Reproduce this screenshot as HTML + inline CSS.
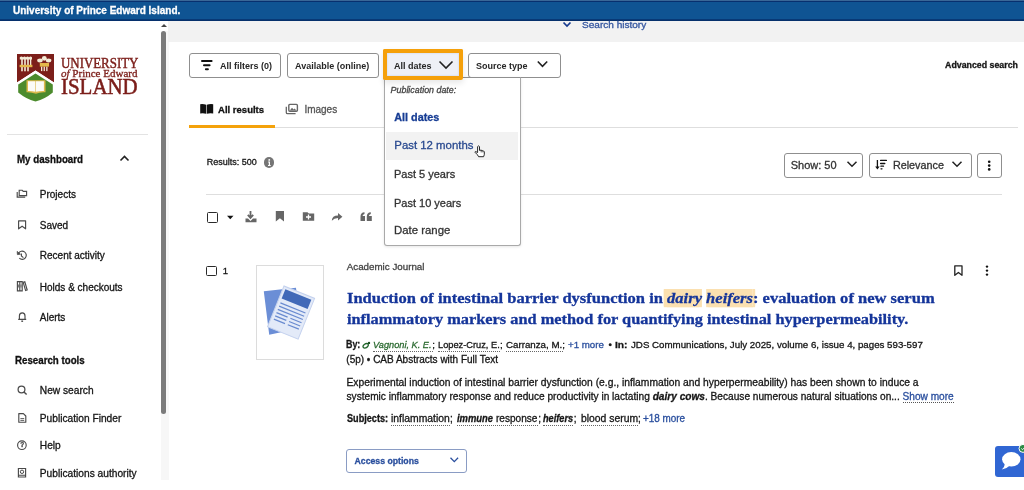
<!DOCTYPE html>
<html><head><meta charset="utf-8"><style>
html,body{margin:0;padding:0;width:1024px;height:490px;overflow:hidden;background:#fff;font-family:"Liberation Sans",sans-serif}
.t{position:absolute;line-height:1;white-space:nowrap;-webkit-text-stroke-width:0.3px}
</style></head><body><div id="root" style="position:absolute;left:0;top:0;width:1024px;height:490px;overflow:hidden;will-change:transform;background:#fff">
<div style="position:absolute;left:0;top:0;width:1024px;height:21px;background:linear-gradient(#3a6797 0,#3a6797 0.8px,#07306f 1px,#07306f 2px,#0f5493 2.2px,#0f5493 19.2px,#06306c 19.6px,#06306c 21px)"></div>
<div class="t" style="left:13px;top:5.73px;font-size:10px;color:#fff;font-weight:bold;font-style:normal;font-family:'Liberation Sans',sans-serif;">University of Prince Edward Island.</div>
<div style="position:absolute;left:161px;top:31px;width:8px;height:449px;background:#f7f7f7"></div>
<div style="position:absolute;left:161px;top:31px;width:5px;height:383px;background:#7b7b7b;border-radius:3px"></div>
<div style="position:absolute;left:160.8px;top:23.6px;width:0;height:0;border-left:3px solid transparent;border-right:3px solid transparent;border-bottom:3px solid #444"></div>
<svg style="position:absolute;left:0;top:0" width="160" height="110">
<path d="M17,53.9 H54 V82.5 L35.5,70.6 L17,82.5 Z" fill="#7c1f1a"/>
<path d="M17,82.5 L35.5,70.6 L54,82.5 V85 L35.5,73.4 L17,85 Z" fill="#fff"/>
<path d="M18.2,84.6 L35.5,73.4 L52.8,84.6 V92.5 Q45,99 35.5,101.6 Q26,99 18.2,92.5 Z" fill="#4c8b2d"/>
<path d="M26.5,80.3 H45.5 V92.2 Q40,91.8 36,93.8 Q31,91.8 26.5,92.2 Z" fill="#dcb94c"/>
<path d="M28,81.2 H35.3 V91.8 Q31.5,90.8 28,91 Z M35.9,81.2 H43.9 V91 Q40,90.8 35.9,91.8 Z" fill="#fbfbf6"/>
<g fill="#f3ebd6">
<path d="M19.8,57.2 Q21.5,55.6 23,57.2 Q24.5,55.6 26,57.2 Q27.5,55.6 29,57.2 Q30.5,55.6 32,57.2 V59.5 H19.8 Z"/>
<rect x="21.2" y="58" width="1.6" height="13.3"/><rect x="24.2" y="58" width="1.6" height="13.3"/><rect x="27.2" y="58" width="1.6" height="13.3"/><rect x="30" y="58" width="1.3" height="9"/>
<ellipse cx="40" cy="60.5" rx="2.8" ry="1.9"/><ellipse cx="44.3" cy="58.3" rx="2.4" ry="2.4"/><ellipse cx="48.6" cy="60.5" rx="2.8" ry="1.9"/>
<rect x="41" y="66.5" width="1.3" height="4.6"/><rect x="43.6" y="66.5" width="1.3" height="4.6"/><rect x="46.2" y="66.5" width="1.3" height="4.6"/>
</g>
<rect x="19.6" y="64.8" width="12.8" height="2.4" fill="#e4b84a"/>
<rect x="39.8" y="63" width="9.2" height="3.6" fill="#e4b84a"/>
</svg>
<div class="t" style="left:61px;top:55.7px;font:15px 'Liberation Serif',serif;color:#7b1d19;-webkit-text-stroke:0.45px #7b1d19;transform:scaleX(0.86);transform-origin:0 0;line-height:1;letter-spacing:0">UNIVERSITY</div>
<div class="t" style="left:61px;top:68.9px;font:10.5px 'Liberation Serif',serif;color:#7b1d19;-webkit-text-stroke:0.3px #7b1d19;transform:scaleX(1.05);transform-origin:0 0;line-height:1"><i>of</i> Prince Edward</div>
<div class="t" style="left:60.5px;top:76.4px;font:22.5px 'Liberation Serif',serif;color:#7b1d19;-webkit-text-stroke:0.55px #7b1d19;transform:scaleX(0.93);transform-origin:0 0;line-height:1">ISLAND</div>
<div style="position:absolute;left:7px;top:134px;width:141px;height:1px;background:#e3e3e3"></div>
<div class="t" style="left:17px;top:154.68px;font-size:10.3px;color:#111;font-weight:bold;font-style:normal;font-family:'Liberation Sans',sans-serif;transform:scaleX(0.945);transform-origin:0 0">My dashboard</div>
<svg style="position:absolute;left:119px;top:154px" width="12" height="9"><path d="M1.5,6.5 L5.5,2.5 L9.5,6.5" fill="none" stroke="#222" stroke-width="1.6"/></svg>
<div class="t" style="left:39.8px;top:189.84px;font-size:10px;color:#161616;font-weight:normal;font-style:normal;font-family:'Liberation Sans',sans-serif;">Projects</div>
<div class="t" style="left:39.8px;top:220.84px;font-size:10px;color:#161616;font-weight:normal;font-style:normal;font-family:'Liberation Sans',sans-serif;">Saved</div>
<div class="t" style="left:39.8px;top:251.43px;font-size:10px;color:#161616;font-weight:normal;font-style:normal;font-family:'Liberation Sans',sans-serif;">Recent activity</div>
<div class="t" style="left:39.8px;top:282.64px;font-size:10px;color:#161616;font-weight:normal;font-style:normal;font-family:'Liberation Sans',sans-serif;">Holds &amp; checkouts</div>
<div class="t" style="left:39.8px;top:313.24px;font-size:10px;color:#161616;font-weight:normal;font-style:normal;font-family:'Liberation Sans',sans-serif;">Alerts</div>
<div class="t" style="left:15.3px;top:356.28px;font-size:10.3px;color:#111;font-weight:bold;font-style:normal;font-family:'Liberation Sans',sans-serif;transform:scaleX(0.944);transform-origin:0 0">Research tools</div>
<div class="t" style="left:39.8px;top:385.87px;font-size:10.2px;color:#161616;font-weight:normal;font-style:normal;font-family:'Liberation Sans',sans-serif;">New search</div>
<div class="t" style="left:39.8px;top:413.87px;font-size:10.2px;color:#161616;font-weight:normal;font-style:normal;font-family:'Liberation Sans',sans-serif;">Publication Finder</div>
<div class="t" style="left:39.8px;top:441.07px;font-size:10.2px;color:#161616;font-weight:normal;font-style:normal;font-family:'Liberation Sans',sans-serif;">Help</div>
<div class="t" style="left:39.8px;top:468.57px;font-size:10.2px;color:#161616;font-weight:normal;font-style:normal;font-family:'Liberation Sans',sans-serif;">Publications authority</div>
<svg style="position:absolute;left:0;top:0" width="40" height="490" fill="none" stroke="#4a4a4a" stroke-width="1.15">
<path d="M19.2,195.6 V190.2 H22.2 L23.2,191.4 H26.6 V195.6 Z"/>
<path d="M17.2,192 V197.1 H25.2"/>
<path d="M18.6,220.8 H25.6 V228.8 L22.1,226.2 L18.6,228.8 Z" stroke-linejoin="round"/>
<path d="M19.3,258.2 A4.1,4.1 0 1 0 18.6,253.2"/>
<path d="M17.2,251.4 L17.4,254.6 L20.4,254.2 Z" fill="#4a4a4a" stroke-width="0.8"/>
<path d="M21.4,253.4 V256 L23.4,257.6"/>
<path d="M17.4,281.6 H22.2 V290.8 H17.4 Z M19.8,281.6 V290.8"/>
<path d="M18.6,284.5 V287.5 M21,284.5 V287.5" stroke-width="0.8"/>
<path d="M23.2,282.4 L24.8,281.8 L27.2,290 L25.6,290.6 Z"/>
<path d="M18.2,319.4 H26.2 M19.4,319.4 V316 A2.8,3.2 0 0 1 25,316 V319.4"/>
<path d="M21.3,321.2 H23.1" stroke-width="1.4"/>
<circle cx="21.5" cy="389.5" r="3.4" stroke-width="1.25"/><path d="M24,392 L26.6,394.6" stroke-width="1.4"/>
<path d="M18.8,413.6 H23.4 L25.8,416 V422.2 H18.8 Z" stroke-linejoin="round"/>
<path d="M20.4,418.6 H24.2 M20.4,420.4 H24.2" stroke-width="0.9"/>
<circle cx="21.9" cy="445.2" r="4.3" stroke-width="1.15"/>
<path d="M18.4,468.5 H25.6 V477 H18.4 Z M18.4,475.2 H25.6"/>
<circle cx="22" cy="471.8" r="1.7" stroke-width="1"/>
</svg>
<div class="t" style="left:20.3px;top:442.40px;font-size:6.5px;color:#4a4a4a;font-weight:bold;font-style:normal;font-family:'Liberation Sans',sans-serif;">?</div>
<div style="position:absolute;left:168px;top:21px;width:856px;height:21px;background:#f2f2f2"></div>
<svg style="position:absolute;left:561px;top:20px" width="12" height="9"><path d="M2.5,2.5 L6,6 L9.5,2.5" fill="none" stroke="#173b8f" stroke-width="1.7"/></svg>
<div class="t" style="left:581.7px;top:20.70px;font-size:9.1px;color:#3557a0;font-weight:normal;font-style:normal;font-family:'Liberation Sans',sans-serif;transform:scaleX(1.105);transform-origin:0 0">Search history</div>
<div style="position:absolute;box-sizing:border-box;border:1px solid #8f8f8f;border-radius:3px;background:#fff;left:189px;top:53px;width:92px;height:24.5px"></div>
<svg style="position:absolute;left:200px;top:58px" width="14" height="14"><path d="M2,3.1 H11.6 M4,7.3 H9.6 M5.9,11.3 H7.9" stroke="#111" stroke-width="2" stroke-linecap="round"/></svg>
<div class="t" style="left:220.2px;top:60.86px;font-size:9.5px;color:#262626;font-weight:bold;font-style:normal;font-family:'Liberation Sans',sans-serif;-webkit-text-stroke-width:0;transform:scaleX(0.947);transform-origin:0 0">All filters (0)</div>
<div style="position:absolute;box-sizing:border-box;border:1px solid #8f8f8f;border-radius:3px;background:#fff;left:286.5px;top:53px;width:92px;height:24.5px"></div>
<div class="t" style="left:295.3px;top:60.86px;font-size:9.5px;color:#262626;font-weight:bold;font-style:normal;font-family:'Liberation Sans',sans-serif;-webkit-text-stroke-width:0;transform:scaleX(0.947);transform-origin:0 0">Available (online)</div>
<div style="position:absolute;box-sizing:border-box;left:383.2px;top:48.8px;width:79.6px;height:31.3px;border:4.2px solid #f5a00a;border-radius:2px;background:#eef0f6;box-shadow:inset 0 0 1.5px 0.5px #d5dcef"></div>
<div class="t" style="left:393.6px;top:60.86px;font-size:9.5px;color:#262626;font-weight:bold;font-style:normal;font-family:'Liberation Sans',sans-serif;-webkit-text-stroke-width:0;transform:scaleX(0.947);transform-origin:0 0">All dates</div>
<svg style="position:absolute;left:438px;top:59px" width="16" height="11"><path d="M1.5,2.5 L8,9 L14.5,2.5" fill="none" stroke="#222" stroke-width="1.6"/></svg>
<div style="position:absolute;box-sizing:border-box;border:1px solid #8f8f8f;border-radius:3px;background:#fff;left:467.5px;top:53px;width:93px;height:24.5px"></div>
<div class="t" style="left:476.2px;top:60.86px;font-size:9.5px;color:#262626;font-weight:bold;font-style:normal;font-family:'Liberation Sans',sans-serif;-webkit-text-stroke-width:0;transform:scaleX(0.947);transform-origin:0 0">Source type</div>
<svg style="position:absolute;left:536px;top:59px" width="13" height="10"><path d="M1.8,2.5 L6.5,7.3 L11.2,2.5" fill="none" stroke="#222" stroke-width="1.6"/></svg>
<div class="t" style="left:945.1px;top:61.25px;font-size:8.8px;color:#161616;font-weight:bold;font-style:normal;font-family:'Liberation Sans',sans-serif;">Advanced search</div>
<svg style="position:absolute;left:199px;top:103px" width="16" height="12"><path d="M1.2,1.2 Q4,0.6 7.2,1.8 V10.8 Q4,9.8 1.2,10.6 Z M14.2,1.2 Q11,0.6 7.8,1.8 V10.8 Q11,9.8 14.2,10.6 Z" fill="#111"/></svg>
<div class="t" style="left:218.1px;top:105.26px;font-size:9.5px;color:#111;font-weight:bold;font-style:normal;font-family:'Liberation Sans',sans-serif;">All results</div>
<svg style="position:absolute;left:285px;top:103px" width="15" height="13"><rect x="3.8" y="1.4" width="8.6" height="6.8" rx="1" fill="none" stroke="#666" stroke-width="1.4"/><path d="M1.3,3.8 V9.4 Q1.3,10.6 2.5,10.6 H10.6" fill="none" stroke="#666" stroke-width="1.3"/><path d="M4.8,7.4 L7,4.8 L8.6,6.4 L9.6,5.4 L11.4,7.4 Z" fill="#666"/></svg>
<div class="t" style="left:304.4px;top:104.83px;font-size:10px;color:#555;font-weight:normal;font-style:normal;font-family:'Liberation Sans',sans-serif;">Images</div>
<div style="position:absolute;left:189px;top:127px;width:829px;height:1px;background:#dedede"></div>
<div style="position:absolute;left:189px;top:125px;width:86px;height:3px;background:#f4a20b"></div>
<div class="t" style="left:206.7px;top:157.88px;font-size:9px;color:#161616;font-weight:normal;font-style:normal;font-family:'Liberation Sans',sans-serif;">Results: 500</div>
<div style="position:absolute;left:263.8px;top:157.3px;width:10.5px;height:10.5px;border-radius:50%;background:#757575"></div>
<svg style="position:absolute;left:263.8px;top:157.3px" width="11" height="11"><circle cx="5.25" cy="2.9" r="0.95" fill="#fff"/><path d="M4.1,4.6 H6 V8 H6.7 V8.9 H4 V8 H4.8 V5.5 H4.1 Z" fill="#fff"/></svg>
<div style="position:absolute;box-sizing:border-box;border:1px solid #8f8f8f;border-radius:3px;background:#fff;left:784px;top:153px;width:79px;height:24.5px"></div>
<div class="t" style="left:790.7px;top:160.09px;font-size:11px;color:#333;font-weight:normal;font-style:normal;font-family:'Liberation Sans',sans-serif;">Show: 50</div>
<svg style="position:absolute;left:845px;top:159px" width="14" height="10"><path d="M2.5,2.8 L7,7.3 L11.5,2.8" fill="none" stroke="#222" stroke-width="1.5"/></svg>
<div style="position:absolute;box-sizing:border-box;border:1px solid #8f8f8f;border-radius:3px;background:#fff;left:869px;top:153px;width:102.5px;height:24.5px"></div>
<svg style="position:absolute;left:874px;top:158px" width="14" height="14"><path d="M3.4,2 V9.5" stroke="#111" stroke-width="1.3"/><path d="M1.2,8.4 H5.6 L3.4,11.6 Z" fill="#111"/><path d="M6.6,2.4 H12.4 M6.6,5.5 H10.8 M6.9,8.2 H9.5 M7,10.8 H8" stroke="#111" stroke-width="1.3" stroke-linecap="round"/></svg>
<div class="t" style="left:892.9px;top:160.26px;font-size:10.8px;color:#333;font-weight:normal;font-style:normal;font-family:'Liberation Sans',sans-serif;">Relevance</div>
<svg style="position:absolute;left:950px;top:159px" width="14" height="10"><path d="M2.5,2.8 L7,7.3 L11.5,2.8" fill="none" stroke="#222" stroke-width="1.5"/></svg>
<div style="position:absolute;box-sizing:border-box;border:1px solid #8f8f8f;border-radius:3px;background:#fff;left:977px;top:153px;width:24.5px;height:24.5px"></div>
<svg style="position:absolute;left:977px;top:153px" width="25" height="25"><circle cx="12.2" cy="8.8" r="1.3" fill="#111"/><circle cx="12.2" cy="12.6" r="1.3" fill="#111"/><circle cx="12.2" cy="16.4" r="1.3" fill="#111"/></svg>
<div style="position:absolute;left:206px;top:194px;width:796px;height:1px;background:#dedede"></div>
<div style="position:absolute;box-sizing:border-box;left:206.5px;top:212px;width:11px;height:11px;border:1.8px solid #2a2a2a;border-radius:1.5px"></div>
<svg style="position:absolute;left:0;top:0;overflow:visible" width="1" height="1"><path d="M227,215.8 H233.5 L230.25,219.2 Z" fill="#111"/><path d="M250.5,211 V217 M247.8,214.8 L250.5,217.8 L253.2,214.8" fill="none" stroke="#666" stroke-width="1.8"/><path d="M245.5,218.5 H248 L250.5,221 L253,218.5 H256.5 V222.2 H245.5 Z" fill="#666"/><path d="M275.8,211 H284 V221.5 L279.9,218.3 L275.8,221.5 Z" fill="#666"/><path d="M302.8,212.3 H307.5 L308.8,213.6 H314.2 V220.7 H302.8 Z" fill="#666"/><path d="M308.5,214.5 V219.5 M306,217 H311" stroke="#fff" stroke-width="1.3"/><path d="M331.8,220.7 Q332,215.5 338,215.5 V213 L342.4,216.8 L338,220.5 V218 Q334,218 331.8,220.7 Z" fill="#666"/><path d="M360.5,221 V216.5 Q360.5,212.5 364.5,212.3 V214 Q362.8,214.3 362.5,216 H365 V221 Z M366.8,221 V216.5 Q366.8,212.5 370.8,212.3 V214 Q369.1,214.3 368.8,216 H371.8 V221 Z" fill="#666"/></svg>
<div style="position:absolute;box-sizing:border-box;left:384.3px;top:77px;width:136.5px;height:168.5px;border:1px solid #a9a9a9;border-top-color:#8f8f8f;border-radius:0 0 3px 3px;background:#fff;box-shadow:0 1px 3px rgba(0,0,0,0.1)"></div>
<div style="position:absolute;box-sizing:border-box;left:383.2px;top:48.8px;width:79.6px;height:31.3px;border:4.2px solid #f5a00a;border-radius:2px;box-shadow:0 3px 6px rgba(0,0,0,0.10)"></div>
<div class="t" style="left:390.6px;top:86.17px;font-size:8.9px;color:#444;font-weight:normal;font-style:italic;font-family:'Liberation Sans',sans-serif;">Publication date:</div>
<div class="t" style="left:394.3px;top:111.76px;font-size:10.8px;color:#173d94;font-weight:bold;font-style:normal;font-family:'Liberation Sans',sans-serif;">All dates</div>
<div style="position:absolute;left:386.4px;top:131.5px;width:132px;height:28px;background:#f2f2f2"></div>
<div class="t" style="left:394.3px;top:140.25px;font-size:11.4px;color:#2a4a90;font-weight:normal;font-style:normal;font-family:'Liberation Sans',sans-serif;">Past 12 months</div>
<div class="t" style="left:394px;top:168.99px;font-size:11px;color:#333;font-weight:normal;font-style:normal;font-family:'Liberation Sans',sans-serif;">Past 5 years</div>
<div class="t" style="left:394px;top:197.59px;font-size:11px;color:#333;font-weight:normal;font-style:normal;font-family:'Liberation Sans',sans-serif;">Past 10 years</div>
<div class="t" style="left:394px;top:225.15px;font-size:11.4px;color:#333;font-weight:normal;font-style:normal;font-family:'Liberation Sans',sans-serif;">Date range</div>
<svg style="position:absolute;left:473.5px;top:144px" width="13" height="15"><path d="M3.6,8.6 V2.6 Q4.5,1.2 5.5,2.6 V6.4 Q7.2,5.8 8.2,6.6 Q9.6,6.5 10.3,7.8 V10.6 L9.6,12.7 H4.6 L3.3,10.6 L1.1,8.4 Q0.9,7.4 1.9,7.6 Z" fill="#fff" stroke="#1a1a1a" stroke-width="0.95" stroke-linejoin="round"/><path d="M7.2,6.5 V8.4 M8.9,6.9 V8.4" stroke="#1a1a1a" stroke-width="0.7"/></svg>
<div style="position:absolute;box-sizing:border-box;left:206.3px;top:265.5px;width:10.6px;height:10.6px;border:1.8px solid #2a2a2a;border-radius:1.5px"></div>
<div class="t" style="left:222.7px;top:266.46px;font-size:9.5px;color:#161616;font-weight:normal;font-style:normal;font-family:'Liberation Sans',sans-serif;">1</div>
<div style="position:absolute;box-sizing:border-box;left:255.6px;top:264.8px;width:68.6px;height:95.7px;border:1px solid #dcdcdc;background:#fff"></div>
<svg style="position:absolute;left:255px;top:264px" width="70" height="97">
<path d="M8.8,27.3 L41,23.8 L46,64 L14.2,70.7 Z" fill="#6b8ed6"/>
<g transform="translate(29,22) rotate(22)">
<rect x="0" y="0" width="33" height="44" fill="#e3eaf8" stroke="#c5d2ee" stroke-width="1"/>
<rect x="2.5" y="2.5" width="28" height="10" fill="#4169b8"/>
<g stroke="#6a8bd0" stroke-width="1.3"><path d="M3,17 H30 M3,20.5 H30 M3,24 H30 M3,27.5 H15 M3,31 H15 M3,34.5 H15 M18,27.5 H30 M18,31 H30 M18,34.5 H30"/></g>
</g>
</svg>
<div class="t" style="left:346.8px;top:262.12px;font-size:9.78px;color:#444;font-weight:normal;font-style:normal;font-family:'Liberation Sans',sans-serif;">Academic Journal</div>
<div class="t" style="left:346.8px;top:290.3px;font:bold 15.6px 'Liberation Serif',serif;color:#15359a;line-height:1;transform:scaleX(1.0595);transform-origin:0 0">Induction of intestinal barrier dysfunction in <i style="background:#fbe0b0;box-shadow:-3px 0 0 #fbe0b0,0 1.2px 0 #fbe0b0,-3px 1.2px 0 #fbe0b0;">dairy</i> <i style="background:#fbe0b0;box-shadow:2.2px 0 0 #fbe0b0,0 1.2px 0 #fbe0b0,2.2px 1.2px 0 #fbe0b0;">heifers</i>: evaluation of new serum</div>
<div class="t" style="left:346.8px;top:310.9px;font:bold 15.6px 'Liberation Serif',serif;color:#15359a;line-height:1;transform:scaleX(1.0475);transform-origin:0 0">inflammatory markers and method for quantifying intestinal hyperpermeability.</div>
<div class="t" style="left:346.3px;top:339.70px;font-size:10.4px;color:#161616;font-weight:bold;font-style:normal;font-family:'Liberation Sans',sans-serif;transform:scaleX(0.8540);transform-origin:0 0">By:</div>
<svg style="position:absolute;left:362px;top:341px" width="9" height="8"><ellipse cx="3.7" cy="4.8" rx="2.9" ry="1.9" transform="rotate(-35 3.7 4.8)" fill="none" stroke="#22662c" stroke-width="1.3"/><circle cx="7" cy="1.9" r="1.2" fill="#1b4f22"/></svg>
<div class="t" style="left:372.8px;top:340.29px;font-size:9.7px;color:#2b6a30;font-weight:normal;font-style:italic;font-family:'Liberation Sans',sans-serif;transform:scaleX(0.9499);transform-origin:0 0">Vagnoni, K. E.</div>
<div class="t" style="left:432.2px;top:340.29px;font-size:9.7px;color:#161616;font-weight:normal;font-style:normal;font-family:'Liberation Sans',sans-serif;">;</div>
<div class="t" style="left:437.7px;top:340.29px;font-size:9.7px;color:#161616;font-weight:normal;font-style:normal;font-family:'Liberation Sans',sans-serif;transform:scaleX(0.9552);transform-origin:0 0">Lopez-Cruz, E.</div>
<div class="t" style="left:500.0px;top:340.29px;font-size:9.7px;color:#161616;font-weight:normal;font-style:normal;font-family:'Liberation Sans',sans-serif;">;</div>
<div class="t" style="left:505.6px;top:340.29px;font-size:9.7px;color:#161616;font-weight:normal;font-style:normal;font-family:'Liberation Sans',sans-serif;transform:scaleX(1.0042);transform-origin:0 0">Carranza, M.</div>
<div class="t" style="left:562.2px;top:340.29px;font-size:9.7px;color:#161616;font-weight:normal;font-style:normal;font-family:'Liberation Sans',sans-serif;">;</div>
<div class="t" style="left:568.0px;top:340.29px;font-size:9.7px;color:#2a4f9e;font-weight:normal;font-style:normal;font-family:'Liberation Sans',sans-serif;transform:scaleX(1.0031);transform-origin:0 0">+1 more</div>
<div class="t" style="left:608.6px;top:340.29px;font-size:9.7px;color:#161616;font-weight:normal;font-style:normal;font-family:'Liberation Sans',sans-serif;">&bull;</div>
<div class="t" style="left:615.0px;top:340.29px;font-size:9.7px;color:#161616;font-weight:bold;font-style:normal;font-family:'Liberation Sans',sans-serif;transform:scaleX(1.0563);transform-origin:0 0">In:</div>
<div class="t" style="left:630.6px;top:340.29px;font-size:9.7px;color:#161616;font-weight:normal;font-style:normal;font-family:'Liberation Sans',sans-serif;transform:scaleX(1.0035);transform-origin:0 0">JDS Communications, July 2025, volume 6, issue 4, pages 593-597</div>
<div style="position:absolute;left:372.5px;top:350.6px;width:60px;height:0;border-top:1px dotted #666"></div>
<div style="position:absolute;left:437.5px;top:350.6px;width:62.5px;height:0;border-top:1px dotted #666"></div>
<div style="position:absolute;left:505.5px;top:350.6px;width:57px;height:0;border-top:1px dotted #666"></div>
<div class="t" style="left:346.3px;top:354.64px;font-size:10px;color:#161616;font-weight:normal;font-style:normal;font-family:'Liberation Sans',sans-serif;">(5p) &bull; CAB Abstracts with Full Text</div>
<div class="t" style="left:346.5px;top:377.69px;font-size:10.29px;color:#161616;font-weight:normal;font-style:normal;font-family:'Liberation Sans',sans-serif;">Experimental induction of intestinal barrier dysfunction (e.g., inflammation and hyperpermeability) has been shown to induce a</div>
<div class="t" style="left:346.5px;top:391.55px;font:10.15px 'Liberation Sans',sans-serif;color:#161616;line-height:1">systemic inflammatory response and reduce productivity in lactating <b><i>dairy cows</i></b>. Because numerous natural situations on... <span style="color:#2a4f9e;border-bottom:1px dotted #555;">Show more</span></div>
<div class="t" style="left:346.7px;top:414.44px;font-size:10px;color:#161616;font-weight:bold;font-style:normal;font-family:'Liberation Sans',sans-serif;transform:scaleX(0.9133);transform-origin:0 0">Subjects:</div>
<div class="t" style="left:391.0px;top:414.44px;font-size:10px;color:#161616;font-weight:normal;font-style:normal;font-family:'Liberation Sans',sans-serif;transform:scaleX(1.0370);transform-origin:0 0">inflammation</div>
<div class="t" style="left:450.0px;top:414.44px;font-size:10px;color:#161616;font-weight:normal;font-style:normal;font-family:'Liberation Sans',sans-serif;">;</div>
<div class="t" style="left:456.9px;top:414.44px;font-size:10px;color:#161616;font-weight:bold;font-style:italic;font-family:'Liberation Sans',sans-serif;transform:scaleX(0.9399);transform-origin:0 0">immune</div>
<div class="t" style="left:496.4px;top:414.44px;font-size:10px;color:#161616;font-weight:normal;font-style:normal;font-family:'Liberation Sans',sans-serif;transform:scaleX(1.0073);transform-origin:0 0">response</div>
<div class="t" style="left:538.2px;top:414.44px;font-size:10px;color:#161616;font-weight:normal;font-style:normal;font-family:'Liberation Sans',sans-serif;">;</div>
<div class="t" style="left:543.2px;top:414.44px;font-size:10px;color:#161616;font-weight:bold;font-style:italic;font-family:'Liberation Sans',sans-serif;transform:scaleX(0.9177);transform-origin:0 0">heifers</div>
<div class="t" style="left:573.8px;top:414.44px;font-size:10px;color:#161616;font-weight:normal;font-style:normal;font-family:'Liberation Sans',sans-serif;">;</div>
<div class="t" style="left:580.5px;top:414.44px;font-size:10px;color:#161616;font-weight:normal;font-style:normal;font-family:'Liberation Sans',sans-serif;transform:scaleX(1.0364);transform-origin:0 0">blood serum</div>
<div class="t" style="left:638.0px;top:414.44px;font-size:10px;color:#161616;font-weight:normal;font-style:normal;font-family:'Liberation Sans',sans-serif;">;</div>
<div class="t" style="left:643.0px;top:414.44px;font-size:10px;color:#2a4f9e;font-weight:normal;font-style:normal;font-family:'Liberation Sans',sans-serif;transform:scaleX(0.9906);transform-origin:0 0">+18 more</div>
<div style="position:absolute;left:391px;top:425.4px;width:58.8px;height:0;border-top:1px dotted #666"></div>
<div style="position:absolute;left:456.9px;top:425.4px;width:80.9px;height:0;border-top:1px dotted #666"></div>
<div style="position:absolute;left:543.2px;top:425.4px;width:30.1px;height:0;border-top:1px dotted #666"></div>
<div style="position:absolute;left:580.5px;top:425.4px;width:57.0px;height:0;border-top:1px dotted #666"></div>
<div style="position:absolute;box-sizing:border-box;left:346.3px;top:448.8px;width:120.3px;height:24px;border:1px solid #8a9cc4;border-radius:3px;background:#fff"></div>
<div class="t" style="left:354.6px;top:457.14px;font-size:8.7px;color:#2a4f9e;font-weight:bold;font-style:normal;font-family:'Liberation Sans',sans-serif;">Access options</div>
<svg style="position:absolute;left:449px;top:456px" width="11" height="8"><path d="M1.5,1.8 L5.3,5.6 L9.1,1.8" fill="none" stroke="#2a4f9e" stroke-width="1.3"/></svg>
<svg style="position:absolute;left:952px;top:263px" width="40" height="16"><path d="M2.8,2.8 H10 V12.3 L6.4,9.5 L2.8,12.3 Z" fill="none" stroke="#222" stroke-width="1.3" stroke-linejoin="round"/><circle cx="35" cy="3.6" r="1.2" fill="#111"/><circle cx="35" cy="7.6" r="1.2" fill="#111"/><circle cx="35" cy="11.6" r="1.2" fill="#111"/></svg>
<div style="position:absolute;left:995px;top:445.6px;width:35px;height:31.3px;background:#3066d3;border-radius:3px"></div>
<svg style="position:absolute;left:995px;top:440px" width="29" height="40"><ellipse cx="16.3" cy="19.3" rx="9.2" ry="7.2" fill="#fff"/><path d="M10,23.5 Q9.5,27.5 6.8,29.6 Q11.5,29 14.5,25.8 Z" fill="#fff"/><circle cx="28" cy="8.4" r="4" fill="#2e8b46" stroke="#fff" stroke-width="1"/><path d="M26.3,8.5 L27.6,9.7 L29.8,7.3" fill="none" stroke="#fff" stroke-width="0.9"/></svg>
</div></body></html>
